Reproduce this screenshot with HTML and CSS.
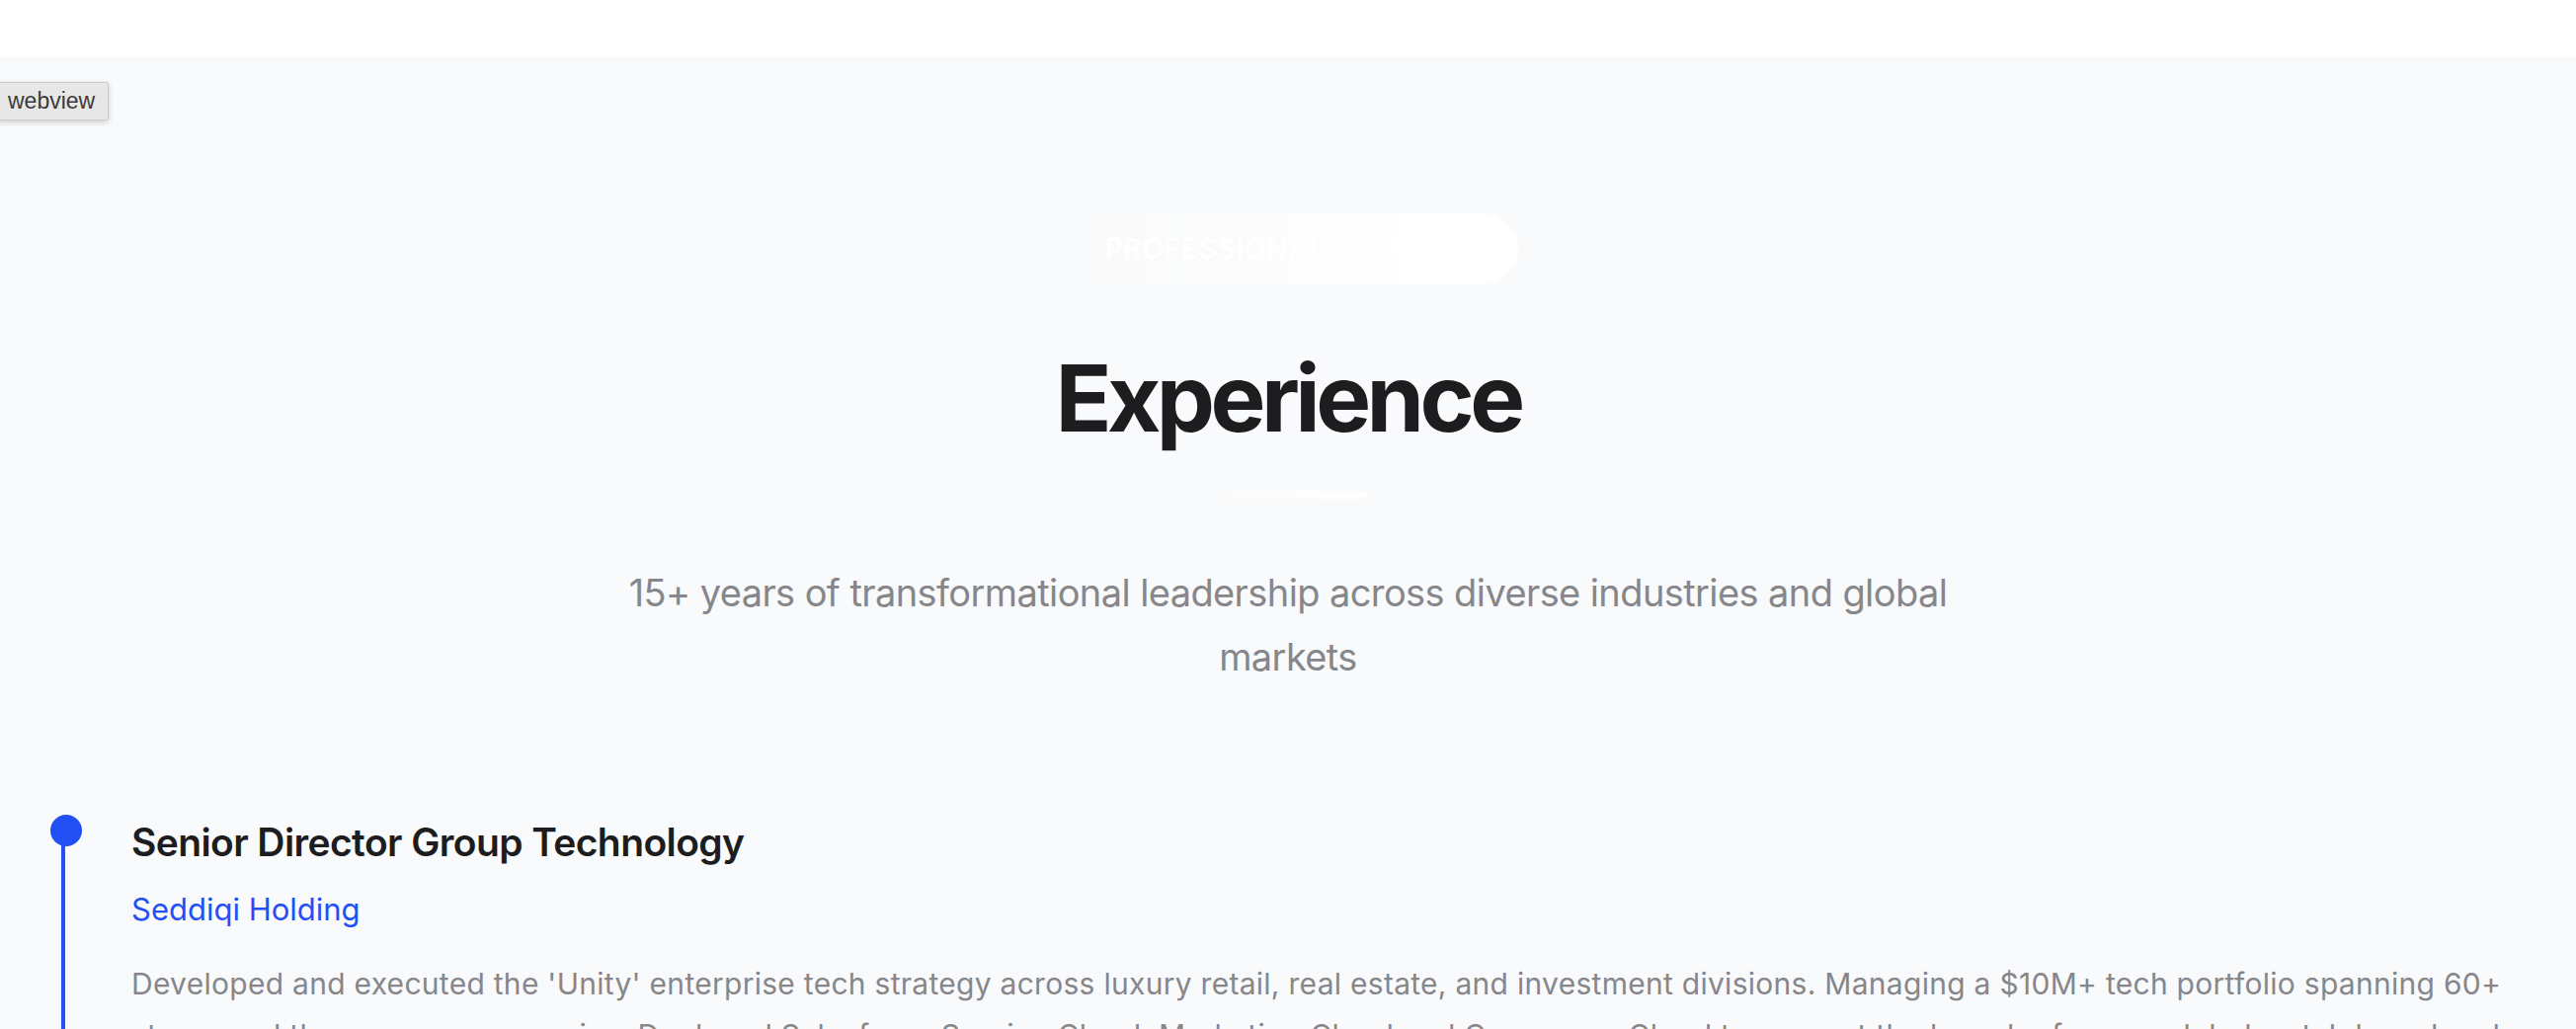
FILE: index.html
```html
<!DOCTYPE html>
<html lang="en">
<head>
<meta charset="utf-8">
<title>Experience</title>
<link rel="stylesheet" href="styles.css">
</head>
<body>
<div class="topbar"></div>
<section class="experience">
  <div class="webview-tag">webview</div>
  <header class="intro">
    <div class="badge">PROFESSIONAL JOURNEY</div>
    <h1 class="heading">Experience</h1>
    <div class="divider"></div>
    <p class="lead">15+ years of transformational leadership across diverse industries and global markets</p>
  </header>
  <div class="timeline">
    <article class="item">
      <span class="dot"></span>
      <span class="line"></span>
      <h2 class="role">Senior Director Group Technology</h2>
      <p class="company">Seddiqi Holding</p>
      <p class="desc">Developed and executed the 'Unity' enterprise tech strategy across luxury retail, real estate, and investment divisions. Managing a $10M+ tech portfolio spanning 60+ stores and three group companies. Deployed Salesforce Service Cloud, Marketing Cloud and Commerce Cloud to support the launch of a new global watch brand and omnichannel experience.</p>
    </article>
  </div>
</section>
</body>
</html>
```
FILE: styles.css
```css
* { box-sizing: border-box; }
html, body { margin: 0; padding: 0; }
body {
  font-family: "Inter", "Liberation Sans", sans-serif;
  background: #f9fafb;
  overflow: hidden;
  height: 1042px;
}
.topbar {
  height: 57px;
  background: #ffffff;
}
.experience {
  position: relative;
  background: #f9fafb;
  padding-top: 159px;
  min-height: 985px;
}
.webview-tag {
  position: absolute;
  top: 26px;
  left: -4px;
  height: 39px;
  padding: 0 13px 0 11px;
  display: flex;
  align-items: center;
  background: #e7e7e7;
  border: 1px solid #cbcbcb;
  border-radius: 2px;
  box-shadow: 0 2px 6px rgba(0,0,0,0.18);
  font-family: "Liberation Sans", "Inter", sans-serif;
  font-size: 23px;
  color: #3a3a3a;
}
.intro {
  display: flex;
  flex-direction: column;
  align-items: center;
  text-align: center;
}
.badge {
  height: 72px;
  padding: 0 48px;
  border-radius: 36px;
  display: flex;
  align-items: center;
  background: linear-gradient(90deg, rgba(255,255,255,0) 0%, rgba(255,255,255,0.35) 40%, rgba(255,255,255,0.8) 65%, #ffffff 80%);
  color: #ffffff;
  font-size: 28px;
  font-weight: 600;
  letter-spacing: 0.7px;
}
.heading {
  margin: 67px 0 0;
  font-size: 94px;
  line-height: 96px;
  font-weight: 700;
  letter-spacing: -4.6px;
  color: #1d1d1f;
}
.divider {
  margin-top: 46px;
  width: 160px;
  height: 8px;
  border-radius: 4px;
  background: linear-gradient(90deg, rgba(255,255,255,0) 0%, rgba(255,255,255,0.6) 40%, #ffffff 100%);
}
.lead {
  margin: 63px 0 0;
  max-width: 1344px;
  font-size: 38px;
  line-height: 65px;
  color: #86868b;
  letter-spacing: -0.6px;
}
.timeline {
  margin-top: 127px;
  padding: 0 48px 0 51px;
}
.item {
  position: relative;
  padding-left: 82px;
}
.dot {
  position: absolute;
  left: 0;
  top: 0;
  width: 32px;
  height: 32px;
  border-radius: 50%;
  background: #2350f5;
  z-index: 1;
}
.line {
  position: absolute;
  left: 11px;
  top: 16px;
  bottom: -200px;
  width: 4px;
  background: #2350f5;
}
.role {
  margin: 0;
  font-size: 39px;
  line-height: 56px;
  font-weight: 600;
  color: #1d1d1f;
  letter-spacing: -0.6px;
}
.company {
  margin: 16px 0 0;
  font-size: 31px;
  line-height: 48px;
  color: #2350f5;
  letter-spacing: 0;
}
.desc {
  margin: 25px 0 0;
  font-size: 30px;
  line-height: 52px;
  color: #86868b;
  letter-spacing: 0.28px;
}
```
